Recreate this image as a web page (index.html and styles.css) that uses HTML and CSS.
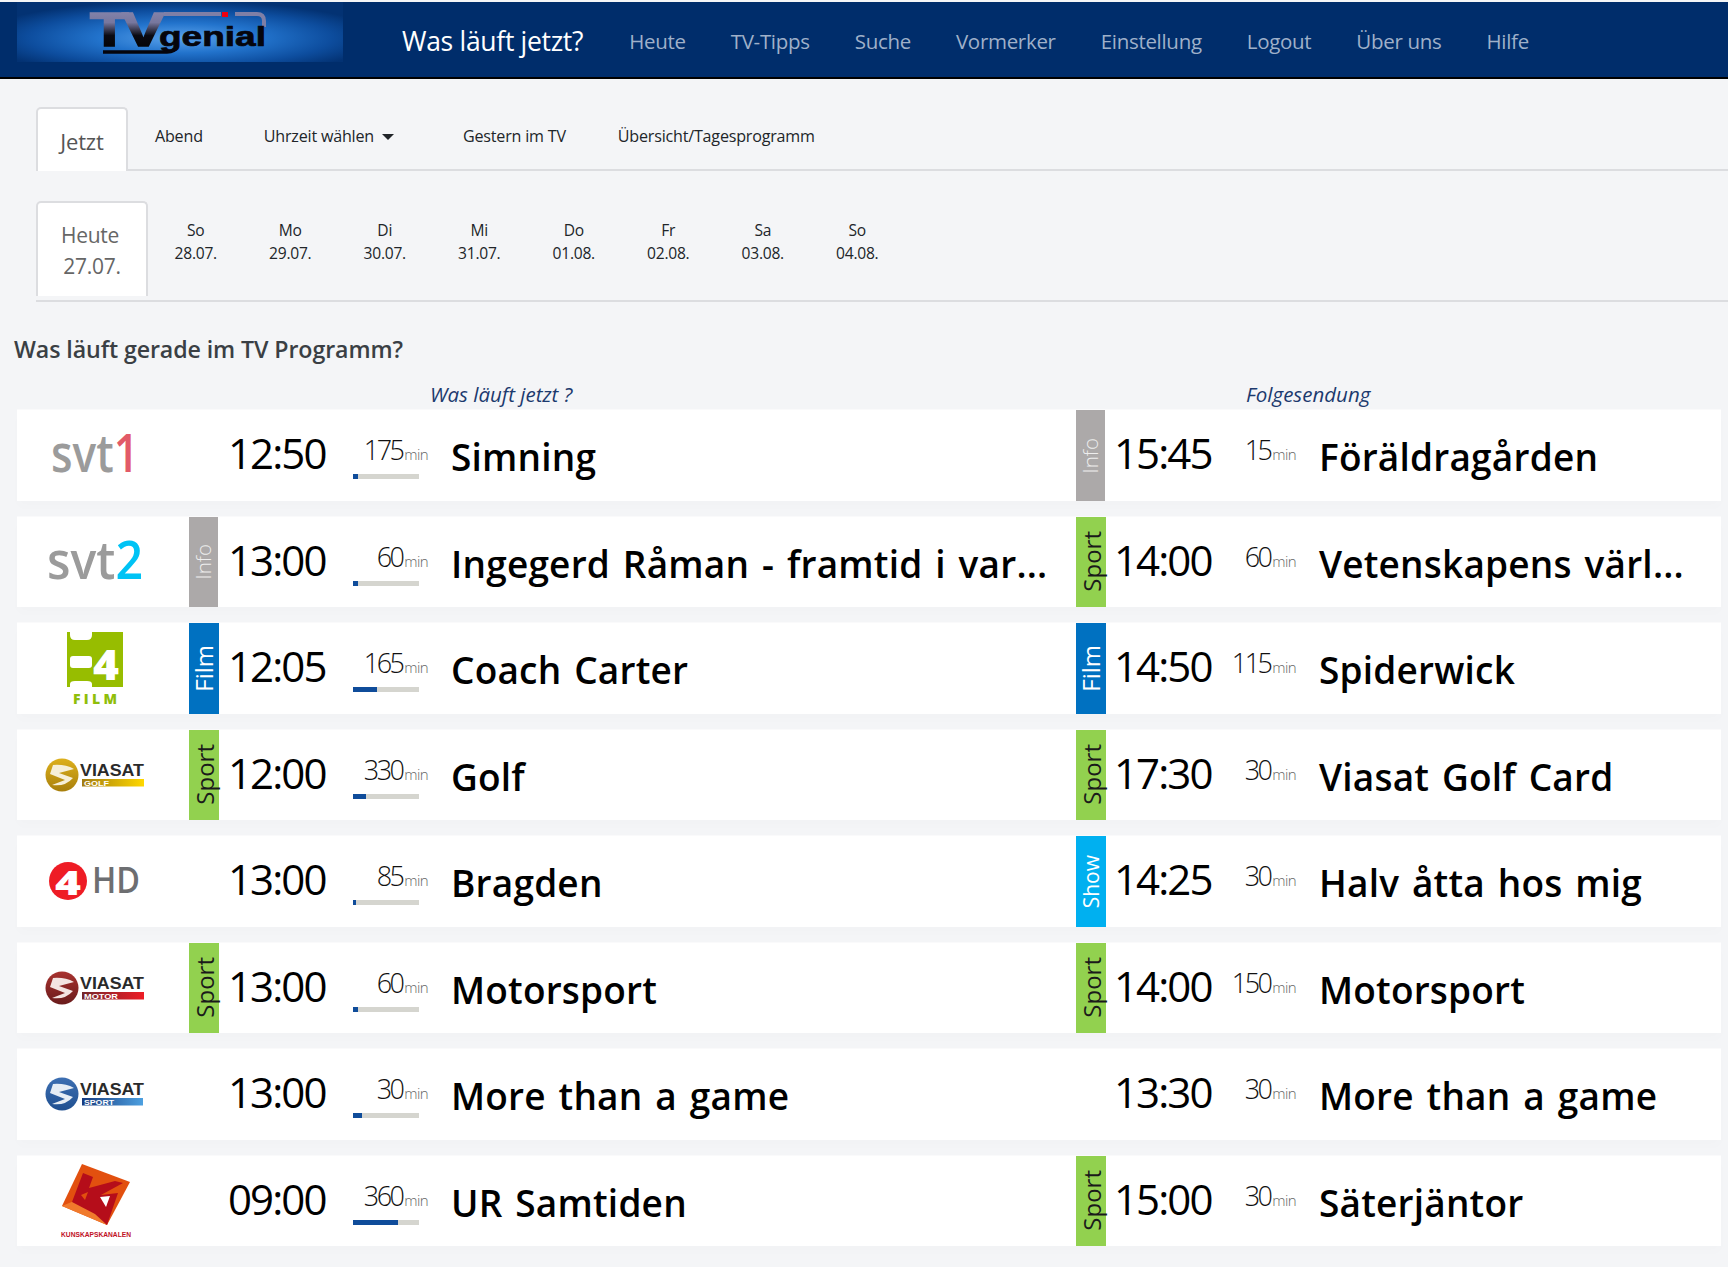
FILE: index.html
```html
<!DOCTYPE html>
<html lang="de">
<head>
<meta charset="utf-8">
<title>Was läuft jetzt?</title>
<link rel="stylesheet" href="styles.css">
</head>
<body>
<svg class="defs" width="0" height="0" aria-hidden="true">
  <defs>
    <radialGradient id="logoGlow" cx="50%" cy="60%" r="62%">
      <stop offset="0" stop-color="#5ba3ec"/>
      <stop offset=".4" stop-color="#2273cc"/>
      <stop offset=".75" stop-color="#0d4d9e"/>
      <stop offset="1" stop-color="#033273"/>
    </radialGradient>
    <linearGradient id="logoText" x1="0" y1="0" x2="0" y2="1">
      <stop offset="0" stop-color="#8e8cb4"/>
      <stop offset=".38" stop-color="#77779e"/>
      <stop offset=".62" stop-color="#0a0a12"/>
      <stop offset="1" stop-color="#000"/>
    </linearGradient>
    <linearGradient id="golfBall" x1="0" y1="0" x2="0" y2="1"><stop offset="0" stop-color="#ddb01c"/><stop offset="1" stop-color="#a87f0c"/></linearGradient>
    <linearGradient id="golfBar" x1="0" y1="0" x2="1" y2="0"><stop offset="0" stop-color="#a37c10"/><stop offset="1" stop-color="#ffd800"/></linearGradient>
    <linearGradient id="motorBall" x1="0" y1="0" x2="0" y2="1"><stop offset="0" stop-color="#a8322f"/><stop offset="1" stop-color="#6a1c1c"/></linearGradient>
    <linearGradient id="motorBar" x1="0" y1="0" x2="1" y2="0"><stop offset="0" stop-color="#74262a"/><stop offset="1" stop-color="#ee1c25"/></linearGradient>
    <linearGradient id="sportBall" x1="0" y1="0" x2="0" y2="1"><stop offset="0" stop-color="#3d6fb2"/><stop offset="1" stop-color="#1f4f90"/></linearGradient>
    <linearGradient id="sportBar" x1="0" y1="0" x2="1" y2="0"><stop offset="0" stop-color="#173a7e"/><stop offset="1" stop-color="#4da0e0"/></linearGradient>
  </defs>
</svg>

<header class="topbar">
  <a class="brand" href="#">
    <svg class="brand-svg" width="326" height="60" viewBox="0 0 326 60">
      <rect width="326" height="60" fill="url(#logoGlow)"/>
      <rect x="147" y="10" width="57" height="4" fill="#7f7fa6"/>
      <rect x="205" y="10" width="6" height="5" fill="#f00010"/>
      <path d="M218 12H240q7 0 7 7v6" fill="none" stroke="#7f7fa6" stroke-width="4"/>
      <text class="brand-tv" x="73" y="44" textLength="68" lengthAdjust="spacingAndGlyphs" fill="url(#logoText)" stroke="url(#logoText)" stroke-width="1.6">TV</text>
      <text class="brand-genial" x="142" y="44" textLength="107" lengthAdjust="spacingAndGlyphs" fill="#05050c" stroke="#05050c" stroke-width=".7">genial</text>
      <path d="M86 50H150q8 0 10-6" fill="none" stroke="#05050c" stroke-width="3.5"/>
    </svg>
  </a>
  <nav class="mainnav">
    <a class="nav-current" href="#">Was läuft jetzt?</a>
    <a href="#">Heute</a>
    <a href="#">TV-Tipps</a>
    <a href="#">Suche</a>
    <a href="#">Vormerker</a>
    <a href="#">Einstellung</a>
    <a href="#">Logout</a>
    <a href="#">Über uns</a>
    <a href="#">Hilfe</a>
  </nav>
</header>

<main class="page">
  <div class="tabs">
    <a class="tab tab-active" href="#">Jetzt</a>
    <a class="tab tab-abend" href="#">Abend</a>
    <a class="tab tab-uhr" href="#">Uhrzeit wählen<span class="caret"></span></a>
    <a class="tab tab-gestern" href="#">Gestern im TV</a>
    <a class="tab" href="#">Übersicht/Tagesprogramm</a>
  </div>

  <div class="days">
    <a class="day-active" href="#"><span class="day-name">Heute</span><span>27.07.</span></a>
    <a class="day" href="#"><span>So</span><span>28.07.</span></a>
    <a class="day" href="#"><span>Mo</span><span>29.07.</span></a>
    <a class="day" href="#"><span>Di</span><span>30.07.</span></a>
    <a class="day" href="#"><span>Mi</span><span>31.07.</span></a>
    <a class="day" href="#"><span>Do</span><span>01.08.</span></a>
    <a class="day" href="#"><span>Fr</span><span>02.08.</span></a>
    <a class="day" href="#"><span>Sa</span><span>03.08.</span></a>
    <a class="day" href="#"><span>So</span><span>04.08.</span></a>
  </div>

  <h1 class="heading">Was läuft gerade im TV Programm?</h1>
  <div class="subheads">
    <span class="sub-now">Was läuft jetzt ?</span>
    <span class="sub-next">Folgesendung</span>
  </div>

  <section class="schedule">
    <article class="row">
      <div class="channel">
        <svg width="88" height="40" viewBox="0 0 88 40"><text class="svt" x="0" y="37" textLength="88" lengthAdjust="spacingAndGlyphs" fill="#9b9b9b">svt<tspan fill="#e25a68">1</tspan></text></svg>
      </div>
      <div class="prog now">
        <span class="badge"></span><span class="time">12:50</span>
        <div class="dur"><span class="mins"><b>175</b><i>min</i></span><span class="bar"><span class="fill" style="width:5px"></span></span></div>
        <span class="title">Simning</span>
      </div>
      <div class="prog next">
        <span class="badge info narrow"><span>Info</span></span><span class="time">15:45</span>
        <div class="dur"><span class="mins"><b>15</b><i>min</i></span></div>
        <span class="title">Föräldragården</span>
      </div>
    </article>

    <article class="row">
      <div class="channel">
        <svg width="96" height="40" viewBox="0 0 96 40"><text class="svt" x="0" y="37" textLength="96" lengthAdjust="spacingAndGlyphs" fill="#9b9b9b">svt<tspan fill="#00c3f5">2</tspan></text></svg>
      </div>
      <div class="prog now">
        <span class="badge info narrow"><span>Info</span></span><span class="time">13:00</span>
        <div class="dur"><span class="mins"><b>60</b><i>min</i></span><span class="bar"><span class="fill" style="width:5px"></span></span></div>
        <span class="title">Ingegerd Råman - framtid i var...</span>
      </div>
      <div class="prog next">
        <span class="badge sport"><span>Sport</span></span><span class="time">14:00</span>
        <div class="dur"><span class="mins"><b>60</b><i>min</i></span></div>
        <span class="title">Vetenskapens värl...</span>
      </div>
    </article>

    <article class="row">
      <div class="channel">
        <svg width="56" height="72" viewBox="0 0 56 72">
          <path fill-rule="evenodd" d="M0 0H3V3Q3 8 8 8H20Q25 8 25 3V0H56V55H25V52Q25 49 20 49H8Q3 49 3 52V55H0ZM6 24Q3 24 3 27V33Q3 36 6 36H22Q25 36 25 33V27Q25 24 22 24Z" fill="#97bd00"/>
          <text class="c4-four" x="26" y="48" textLength="26" lengthAdjust="spacingAndGlyphs">4</text>
          <text class="c4-film" x="6" y="72" textLength="44" lengthAdjust="spacing">FILM</text>
        </svg>
      </div>
      <div class="prog now">
        <span class="badge film"><span>Film</span></span><span class="time">12:05</span>
        <div class="dur"><span class="mins"><b>165</b><i>min</i></span><span class="bar"><span class="fill" style="width:24px"></span></span></div>
        <span class="title">Coach Carter</span>
      </div>
      <div class="prog next">
        <span class="badge film"><span>Film</span></span><span class="time">14:50</span>
        <div class="dur"><span class="mins"><b>115</b><i>min</i></span></div>
        <span class="title">Spiderwick</span>
      </div>
    </article>

    <article class="row">
      <div class="channel">
        <svg width="100" height="34" viewBox="0 0 100 34">
          <circle cx="17" cy="17" r="16.5" fill="url(#golfBall)"/>
          <path d="M8 7Q20 6 29 11L14 15L28 20Q20 29 7 27L20 22L5 16Z" fill="#f6efd8"/>
          <text class="via" x="35" y="18" textLength="64" lengthAdjust="spacingAndGlyphs">VIASAT</text>
          <rect x="37" y="21" width="62" height="7.5" fill="url(#golfBar)"/>
          <text class="via-sub" x="39" y="27.5" textLength="25" lengthAdjust="spacingAndGlyphs">GOLF</text>
        </svg>
      </div>
      <div class="prog now">
        <span class="badge sport"><span>Sport</span></span><span class="time">12:00</span>
        <div class="dur"><span class="mins"><b>330</b><i>min</i></span><span class="bar"><span class="fill" style="width:13px"></span></span></div>
        <span class="title">Golf</span>
      </div>
      <div class="prog next">
        <span class="badge sport"><span>Sport</span></span><span class="time">17:30</span>
        <div class="dur"><span class="mins"><b>30</b><i>min</i></span></div>
        <span class="title">Viasat Golf Card</span>
      </div>
    </article>

    <article class="row">
      <div class="channel">
        <svg width="92" height="38" viewBox="0 0 92 38">
          <circle cx="19" cy="19" r="19" fill="#ee1c25"/>
          <text class="four-hd-four" x="6" y="33" textLength="26" lengthAdjust="spacingAndGlyphs">4</text>
          <text class="four-hd" x="43" y="31" textLength="48" lengthAdjust="spacingAndGlyphs">HD</text>
        </svg>
      </div>
      <div class="prog now">
        <span class="badge"></span><span class="time">13:00</span>
        <div class="dur"><span class="mins"><b>85</b><i>min</i></span><span class="bar"><span class="fill" style="width:3px"></span></span></div>
        <span class="title">Bragden</span>
      </div>
      <div class="prog next">
        <span class="badge show"><span>Show</span></span><span class="time">14:25</span>
        <div class="dur"><span class="mins"><b>30</b><i>min</i></span></div>
        <span class="title">Halv åtta hos mig</span>
      </div>
    </article>

    <article class="row">
      <div class="channel">
        <svg width="100" height="34" viewBox="0 0 100 34">
          <circle cx="17" cy="17" r="16.5" fill="url(#motorBall)"/>
          <path d="M8 7Q20 6 29 11L14 15L28 20Q20 29 7 27L20 22L5 16Z" fill="#f3e4e2"/>
          <text class="via" x="35" y="18" textLength="64" lengthAdjust="spacingAndGlyphs">VIASAT</text>
          <rect x="37" y="21" width="62" height="7.5" fill="url(#motorBar)"/>
          <text class="via-sub" x="39" y="27.5" textLength="34" lengthAdjust="spacingAndGlyphs">MOTOR</text>
        </svg>
      </div>
      <div class="prog now">
        <span class="badge sport"><span>Sport</span></span><span class="time">13:00</span>
        <div class="dur"><span class="mins"><b>60</b><i>min</i></span><span class="bar"><span class="fill" style="width:5px"></span></span></div>
        <span class="title">Motorsport</span>
      </div>
      <div class="prog next">
        <span class="badge sport"><span>Sport</span></span><span class="time">14:00</span>
        <div class="dur"><span class="mins"><b>150</b><i>min</i></span></div>
        <span class="title">Motorsport</span>
      </div>
    </article>

    <article class="row">
      <div class="channel">
        <svg width="100" height="34" viewBox="0 0 100 34">
          <circle cx="17" cy="17" r="16.5" fill="url(#sportBall)"/>
          <path d="M8 7Q20 6 29 11L14 15L28 20Q20 29 7 27L20 22L5 16Z" fill="#e6edf5"/>
          <text class="via" x="35" y="18" textLength="64" lengthAdjust="spacingAndGlyphs">VIASAT</text>
          <rect x="37" y="21" width="61" height="7.5" fill="url(#sportBar)"/>
          <text class="via-sub" x="39" y="27.5" textLength="30" lengthAdjust="spacingAndGlyphs">SPORT</text>
        </svg>
      </div>
      <div class="prog now">
        <span class="badge"></span><span class="time">13:00</span>
        <div class="dur"><span class="mins"><b>30</b><i>min</i></span><span class="bar"><span class="fill" style="width:9px"></span></span></div>
        <span class="title">More than a game</span>
      </div>
      <div class="prog next">
        <span class="badge"></span><span class="time">13:30</span>
        <div class="dur"><span class="mins"><b>30</b><i>min</i></span></div>
        <span class="title">More than a game</span>
      </div>
    </article>

    <article class="row">
      <div class="channel">
        <svg class="ks-logo" width="72" height="74" viewBox="0 0 72 74">
          <path d="M21 0L69 18L46 61L1 42Z" fill="#e2500f"/>
          <path d="M1 42L13 37L40 52L46 61Z" fill="#f07a2c"/>
          <path d="M22 9L32 13L28 24L54 17L62 19L40 31L57 29L46 61L34 50L11 38Z" fill="#b50d1a"/>
          <path d="M39 33L49 32L45 43Z" fill="#fff"/>
          <path d="M27 28L24 36L20 31Z" fill="#e2500f"/>
          <text class="ks" x="0" y="73" textLength="70" lengthAdjust="spacingAndGlyphs">KUNSKAPSKANALEN</text>
        </svg>
      </div>
      <div class="prog now">
        <span class="badge"></span><span class="time">09:00</span>
        <div class="dur"><span class="mins"><b>360</b><i>min</i></span><span class="bar"><span class="fill" style="width:45px"></span></span></div>
        <span class="title">UR Samtiden</span>
      </div>
      <div class="prog next">
        <span class="badge sport"><span>Sport</span></span><span class="time">15:00</span>
        <div class="dur"><span class="mins"><b>30</b><i>min</i></span></div>
        <span class="title">Säterjäntor</span>
      </div>
    </article>
  </section>
</main>
</body>
</html>
```
FILE: styles.css
```css
* { box-sizing: border-box; }
html, body { margin: 0; padding: 0; }
body {
  background: #f4f5f7;
  font-family: "Open Sans", "Noto Sans", sans-serif;
  color: #212529;
  height: 1267px;
  overflow: hidden;
}
a { text-decoration: none; color: inherit; }
.defs { position: absolute; }

/* top bar */
.topbar {
  height: 77px;
  margin-top: 2px;
  background: #002d6b;
  border-bottom: 2px solid #000;
  display: flex;
  align-items: flex-start;
  padding-left: 17px;
}
.brand { display: block; width: 326px; height: 60px; }
.brand-svg { display: block; }
.brand-tv { font: 700 49px "Liberation Sans", sans-serif; letter-spacing: -5px; }
.brand-genial { font: 700 27px "Liberation Sans", sans-serif; }
.mainnav {
  display: flex;
  align-items: center;
  height: 78px;
  margin-left: 59px;
  color: #9fb0c9;
  font-size: 20.5px;
  letter-spacing: -.3px;
}
.mainnav a { margin-right: 45px; }
.mainnav .nav-current {
  color: #fff;
  font-size: 26.5px;
  letter-spacing: -.3px;
  margin-right: 46px;
}

/* tabs */
.page { padding: 28px 0 0; }
.tabs {
  display: flex;
  align-items: flex-start;
  margin-left: 36px;
  height: 64px;
  border-bottom: 2px solid #dcdde0;
}
.tab {
  font-size: 16.1px;
  line-height: 22px;
  padding-top: 18px;
  color: #212529;
  margin-right: 52px;
  letter-spacing: -.2px;
}
.tab-active {
  height: 64px;
  width: 92px;
  padding-top: 21px;
  margin-right: 27px;
  text-align: center;
  background: #fff;
  border: 2px solid #dcdde0;
  border-bottom: 0;
  border-radius: 5px 5px 0 0;
  font-size: 22px;
  color: #555;
}
.tab-abend { margin-right: 61px; }
.tab-uhr { margin-right: 69px; }
.caret {
  display: inline-block;
  margin-left: 8px;
  vertical-align: 2px;
  border-top: 6px solid #212529;
  border-left: 6px solid transparent;
  border-right: 6px solid transparent;
}

.days {
  display: flex;
  align-items: flex-start;
  margin: 30px 0 0 36px;
  height: 101px;
  border-bottom: 2px solid #dcdde0;
}
.day-active {
  width: 112px;
  height: 95px;
  display: flex;
  flex-direction: column;
  align-items: center;
  padding-top: 17px;
  background: #fff;
  border: 2px solid #dcdde0;
  border-bottom: 0;
  border-radius: 5px 5px 0 0;
  font-size: 21px;
  line-height: 31px;
  color: #666;
  letter-spacing: -.3px;
}
.day-name { padding-right: 4px; }
.day {
  width: 94.5px;
  display: flex;
  flex-direction: column;
  align-items: center;
  padding: 18px 0 0 1px;
  font-size: 15.6px;
  line-height: 22.5px;
  letter-spacing: -.25px;
}

.heading {
  margin: 32px 0 0 14px;
  font-size: 23.2px;
  line-height: 30px;
  font-weight: 600;
  color: #3a3f44;
  letter-spacing: -.1px;
}
.subheads {
  display: flex;
  height: 30px;
  margin-top: 16px;
  font-style: italic;
  font-size: 20.5px;
  line-height: 28px;
  color: #1c3a6e;
}
.sub-now { margin-left: 430px; width: 816px; }

/* schedule */
.schedule {
  display: grid;
  grid-auto-rows: 90.5px;
  row-gap: 16px;
  margin: 0 7px 0 17px;
}
.row {
  display: grid;
  grid-template-columns: 172px 887px 1fr;
  background: #fff;
  box-shadow: 0 -1px 0 0 #fafafb, 0 6px 10px rgba(0, 0, 0, .012);
}
.channel {
  display: flex;
  align-items: center;
  justify-content: center;
  padding-right: 16px;
}
.channel svg { display: block; overflow: visible; }
.channel .ks-logo { margin-left: 3px; }
.svt { font: 600 52px "Open Sans", sans-serif; }
.c4-four { font: 800 42px "Open Sans", sans-serif; fill: #fff; }
.c4-film { font: 800 14px "Open Sans", sans-serif; fill: #8fbe0a; }
.via { font: 700 17px "Liberation Sans", sans-serif; fill: #2a2a2a; }
.via-sub { font: 700 7px "Liberation Sans", sans-serif; fill: #fff; }
.four-hd-four { font: 800 34px "Open Sans", sans-serif; fill: #fff; }
.four-hd { font: 600 36px "Open Sans", sans-serif; fill: #6d6e71; }
.ks { font: 700 6.5px "Liberation Sans", sans-serif; fill: #c01025; }

.prog { display: flex; align-items: flex-start; min-width: 0; }
.badge {
  flex: none;
  width: 30px;
  height: 100%;
  display: flex;
  align-items: center;
  justify-content: center;
  font-size: 24px;
}
.badge span { writing-mode: vertical-rl; transform: rotate(180deg); line-height: 1; }
.info { background: #aca9a9; color: #eee; font-size: 20.5px; font-weight: 300; }
.narrow { width: 29px; margin-right: 1px; }
.sport { background: #92d14f; color: #1a1a1a; padding-left: 2px; }
.film { background: #0071c1; color: #fff; }
.show { background: #00b0f0; color: #fff; font-size: 21px; }

.time {
  flex: none;
  margin-left: 9px;
  font-size: 42px;
  line-height: 54px;
  padding-top: 16px;
  font-weight: 500;
  color: #000;
  letter-spacing: -1.9px;
}
.now .time { width: 125px; }
.next .time { width: 106px; margin-left: 8px; }
.dur { flex: none; width: 75px; padding-top: 24px; }
.next .dur { width: 76px; }
.mins { display: block; text-align: right; line-height: 32px; height: 32px; white-space: nowrap; }
.mins b { font-weight: 300; font-size: 27px; letter-spacing: -2.6px; color: #111; }
.mins i { font-style: normal; font-weight: 300; font-size: 15px; letter-spacing: -.6px; color: #666; margin-left: 2px; }
.bar { display: block; width: 66px; height: 5px; margin-top: 8px; background: #d5d5cf; }
.fill { display: block; height: 5px; background: #0f4c9a; }
.title {
  margin-left: 23px;
  font-size: 37px;
  line-height: 50px;
  padding-top: 22px;
  font-weight: 600;
  color: #000;
  white-space: nowrap;
  letter-spacing: .2px;
  word-spacing: 3px;
}
```
